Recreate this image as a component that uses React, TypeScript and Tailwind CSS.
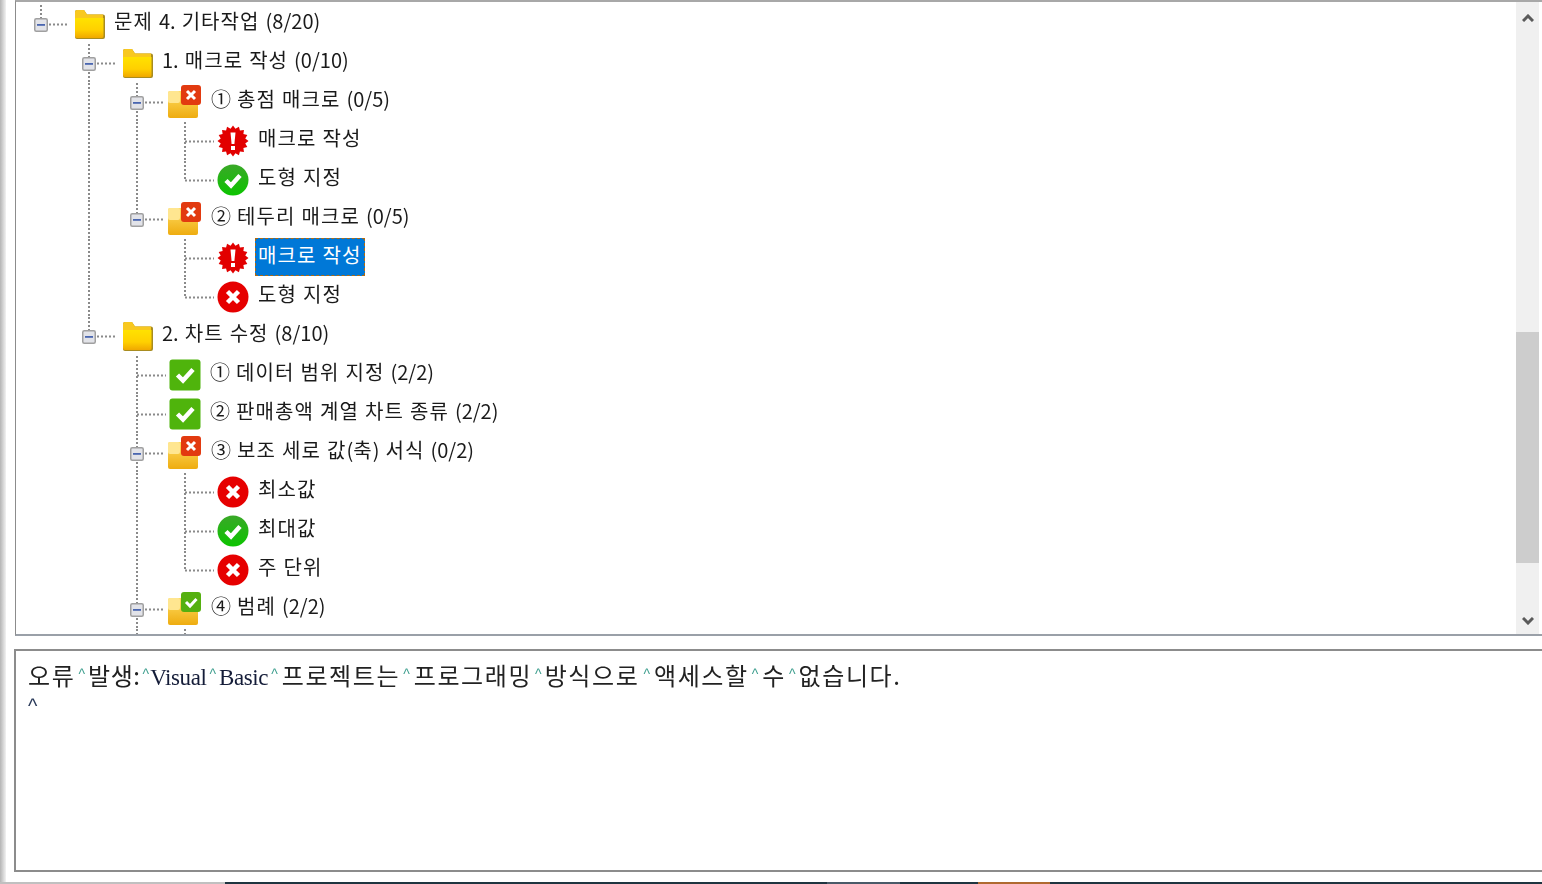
import React from "react";

type IconKind = "folder" | "folderX" | "folderOk" | "star" | "ok" | "no" | "okSquare";

type Row = {
  level: 0 | 1 | 2 | 3;
  icon: IconKind;
  label: string;
  expander?: boolean;
  guides?: number[];
  down?: boolean;
  selected?: boolean;
};

const cx = [41, 89, 137, 185];
const iconX = [75, 123, 168, 217];
const PANEL_X = 16;

const rows: Row[] = [
  { level: 0, icon: "folder", label: "문제 4. 기타작업 (8/20)", expander: true },
  { level: 1, icon: "folder", label: "1. 매크로 작성 (0/10)", expander: true, down: true },
  { level: 2, icon: "folderX", label: "① 총점 매크로 (0/5)", expander: true, guides: [89], down: true },
  { level: 3, icon: "star", label: "매크로 작성", guides: [89, 137], down: true },
  { level: 3, icon: "ok", label: "도형 지정", guides: [89, 137] },
  { level: 2, icon: "folderX", label: "② 테두리 매크로 (0/5)", expander: true, guides: [89] },
  { level: 3, icon: "star", label: "매크로 작성", guides: [89], down: true, selected: true },
  { level: 3, icon: "no", label: "도형 지정", guides: [89] },
  { level: 1, icon: "folder", label: "2. 차트 수정 (8/10)", expander: true },
  { level: 2, icon: "okSquare", label: "① 데이터 범위 지정 (2/2)", down: true },
  { level: 2, icon: "okSquare", label: "② 판매총액 계열 차트 종류 (2/2)", down: true },
  { level: 2, icon: "folderX", label: "③ 보조 세로 값(축) 서식 (0/2)", expander: true, down: true },
  { level: 3, icon: "no", label: "최소값", guides: [137], down: true },
  { level: 3, icon: "ok", label: "최대값", guides: [137], down: true },
  { level: 3, icon: "no", label: "주 단위", guides: [137] },
  { level: 2, icon: "folderOk", label: "④ 범례 (2/2)", expander: true, down: true },
];

const starPoints = Array.from({ length: 32 }, (_, i) => {
  const r = i % 2 === 0 ? 15.5 : 12.5;
  const a = (i / 32) * Math.PI * 2;
  return `${16 + r * Math.cos(a)},${16 + r * Math.sin(a)}`;
}).join(" ");

const FolderShape = ({ light }: { light?: boolean }) => (
  <>
    <defs>
      <linearGradient id="folderBody" x1="0" y1="0" x2="0" y2="1">
        <stop offset="0" stopColor="#ffe200" />
        <stop offset="0.6" stopColor="#ffd000" />
        <stop offset="1" stopColor="#f0a800" />
      </linearGradient>
      <linearGradient id="folderLight" x1="0" y1="0" x2="0" y2="1">
        <stop offset="0" stopColor="#ffdc60" />
        <stop offset="1" stopColor="#eeac10" />
      </linearGradient>
    </defs>
    {light ? (
      <>
        <rect x="0" y="6" width="30" height="27" rx="2" fill="url(#folderLight)" />
        <rect x="0" y="6" width="12" height="12" rx="2" fill="#ffe690" />
      </>
    ) : (
      <>
        <path d="M0 3Q0 1 2 1H9L12 5.5H28Q30 5.5 30 7.5V28Q30 30 28 30H2Q0 30 0 28Z" fill="#a88c20" />
        <path d="M0 3Q0 1 2 1H9L12 5.5H28V10H0Z" fill="#f8c820" />
        <path d="M0 10Q0 9 1 9H28.5V27Q28.5 29 27 29H2Q0 29 0 27Z" fill="url(#folderBody)" />
      </>
    )}
  </>
);

const StatusIcon = ({ kind }: { kind: IconKind }) => {
  if (kind === "folder") {
    return (
      <svg width="31" height="31" viewBox="0 0 31 31" className="block">
        <FolderShape />
      </svg>
    );
  }
  if (kind === "folderX" || kind === "folderOk") {
    const isX = kind === "folderX";
    return (
      <svg width="34" height="34" viewBox="0 0 34 34" className="-mt-[2px] block">
        <FolderShape light />
        <rect x="13" y="0" width="20" height="20" rx="3" fill={isX ? "#e23a10" : "#55b010"} />
        {isX ? (
          <path d="M19 6L27 14M27 6L19 14" stroke="#fff" strokeWidth="3" />
        ) : (
          <path d="M18 10L22 14L28.5 7" stroke="#fff" strokeWidth="3" fill="none" />
        )}
      </svg>
    );
  }
  if (kind === "star") {
    return (
      <svg width="32" height="32" viewBox="0 0 32 32" className="-mt-[1px] block">
        <polygon points={starPoints} fill="#e20000" />
        <path d="M13.5 7.5H18.5L17.4 19H14.6Z" fill="#fff" />
        <rect x="14" y="21" width="4" height="4" fill="#fff" />
      </svg>
    );
  }
  if (kind === "ok") {
    return (
      <svg width="32" height="32" viewBox="0 0 32 32" className="-mt-[2px] block">
        <defs>
          <linearGradient id="okFill" x1="0" y1="0" x2="0" y2="1">
            <stop offset="0" stopColor="#3aa828" />
            <stop offset="1" stopColor="#0cc400" />
          </linearGradient>
        </defs>
        <circle cx="16" cy="16" r="15.5" fill="url(#okFill)" />
        <path d="M9 16.5L14 21.5L23 11.5" stroke="#fff" strokeWidth="4.5" fill="none" />
      </svg>
    );
  }
  if (kind === "no") {
    return (
      <svg width="32" height="32" viewBox="0 0 32 32" className="-mt-[2px] block">
        <circle cx="16" cy="16" r="15.5" fill="#e60000" />
        <path d="M10.5 10.5L21.5 21.5M21.5 10.5L10.5 21.5" stroke="#fff" strokeWidth="4.5" />
      </svg>
    );
  }
  return (
    <svg width="32" height="32" viewBox="0 0 32 32" className="-mt-[1px] block">
      <rect x="0.5" y="0.5" width="31" height="31" rx="3" fill="#4fb40c" />
      <path d="M8.5 16L14 21.5L24 10.5" stroke="#fff" strokeWidth="4.5" fill="none" />
    </svg>
  );
};

const Guides = ({ row }: { row: Row }) => {
  const x = cx[row.level];
  const ix = iconX[row.level] + (row.icon === "okSquare" ? 1 : 0);
  const dots = { stroke: "#8a8a8a", strokeWidth: 2, strokeDasharray: "2 2" };
  const lineY = 19.5;
  const endGap = row.level < 2 ? 6 : 3;
  return (
    <svg width={ix - PANEL_X} height="39" className="block shrink-0">
      {(row.guides ?? []).map((g) => (
        <line key={g} x1={g - PANEL_X} x2={g - PANEL_X} y1="0" y2="39" {...dots} />
      ))}
      <line x1={x - PANEL_X} x2={x - PANEL_X} y1="0" y2={row.down ? 39 : lineY} {...dots} />
      <line x1={x - PANEL_X} x2={ix - PANEL_X - endGap} y1={lineY} y2={lineY} {...dots} />
      {row.expander && (
        <g transform={`translate(${x - PANEL_X - 7} 13)`}>
          <rect x="0.75" y="0.75" width="12.5" height="12.5" rx="1.5" fill="#e2e3e8" stroke="#a0a0a0" strokeWidth="1.5" />
          <rect x="3" y="6" width="8" height="1.8" fill="#4a66b0" />
        </g>
      )}
    </svg>
  );
};

// hangul runs carry the tracking, digits and spaces sit tighter like in the original font
const Label = ({ text }: { text: string }) => (
  <>
    {text.split(/([가-힣]+)/).map((part, i) =>
      /[가-힣]/.test(part) ? (
        <span key={i} className="tracking-[1.1px]">
          {part}
        </span>
      ) : (
        <span key={i}>{part}</span>
      ),
    )}
  </>
);

const TreeRow = ({ row }: { row: Row }) => {
  const gap = row.level === 3 ? 9 : row.level === 2 ? 9 : 8;
  return (
    <div className="flex h-[39px] shrink-0 items-center">
      <Guides row={row} />
      <StatusIcon kind={row.icon} />
      {row.selected ? (
        <span className="ml-[6px] -mt-[3px] flex h-[38px] w-[110px] items-center border border-dashed border-[#b06a10] bg-[#0078d7] pb-[4px] pl-[2px] text-[20px] [word-spacing:1.5px] whitespace-pre text-white">
          <Label text={row.label} />
        </span>
      ) : (
        <span
          className="pb-[7px] text-[20px] [word-spacing:1.5px] whitespace-pre text-[#1a1a1a]"
          style={{ marginLeft: gap }}
        >
          <Label text={row.label} />
        </span>
      )}
    </div>
  );
};

const Caret = () => (
  <span className="relative -top-[6px] mx-[3px] font-['Liberation_Sans',sans-serif] text-[14px] tracking-normal text-[#3f9f8f]">
    ^
  </span>
);

const Ko = ({ children }: { children: string }) => (
  <span className="tracking-[1.6px]">{children}</span>
);

const En = ({ children }: { children: string }) => (
  <span className="font-['Liberation_Serif',serif] text-[23px] tracking-[-0.4px] text-[#141c38]">{children}</span>
);

export default function App() {
  return (
    <div className="flex h-[884px] w-[1542px] flex-col overflow-hidden bg-white font-['Noto_Sans_CJK_KR',sans-serif]">
      <div className="flex min-h-0 flex-1">
        <div className="w-[6px] shrink-0 bg-gradient-to-r from-[#b4b4b4] to-[#f2f2f2]" />
        <div className="flex min-w-0 flex-1 flex-col">
          <div className="ml-[9px] flex h-[636px] shrink-0 border-t-2 border-b-2 border-l border-t-[#a8a8a8] border-b-[#9aa0a8] border-l-[#8c8c8c]">
            <div className="flex min-w-0 flex-1 flex-col overflow-hidden pt-[3px] blur-[0.35px]">
              {rows.map((row, i) => (
                <TreeRow key={i} row={row} />
              ))}
              <svg width="190" height="10" className="block shrink-0">
                <line x1="121" x2="121" y1="0" y2="10" stroke="#8a8a8a" strokeWidth="2" strokeDasharray="2 2" />
                <line x1="169" x2="169" y1="0" y2="10" stroke="#8a8a8a" strokeWidth="2" strokeDasharray="2 2" />
              </svg>
            </div>
            <div className="mr-[3px] flex w-[23px] shrink-0 flex-col bg-[#f0f0f0] pt-[2px]">
              <div className="flex h-[28px] items-center justify-center">
                <svg width="12" height="8" viewBox="0 0 12 8">
                  <path d="M1 7L6 2L11 7" stroke="#5a5a5a" strokeWidth="3" fill="none" />
                </svg>
              </div>
              <div className="mt-[300px] h-[231px] bg-[#cdcdcd]" />
              <div className="mt-auto flex h-[26px] items-center justify-center">
                <svg width="12" height="8" viewBox="0 0 12 8">
                  <path d="M1 1L6 6L11 1" stroke="#5a5a5a" strokeWidth="3" fill="none" />
                </svg>
              </div>
            </div>
          </div>
          <div className="mt-[13px] ml-[8px] h-[223px] shrink-0 border-t-2 border-b-2 border-l-2 border-t-[#8c8c8c] border-b-[#8c8c8c] border-l-[#8c8c8c] pt-[8px] pl-[12px] text-[24px] leading-[32px] text-[#222]">
            <div className="blur-[0.3px]">
              <div className="whitespace-pre">
                <Ko>오류</Ko>
                <Caret />
                <span className="tracking-[0.6px]">발생:</span>
                <span className="-ml-[1px]">
                  <Caret />
                </span>
                <span className="-ml-[2px]">
                  <En>Visual</En>
                </span>
                <Caret />
                <En>Basic</En>
                <span className="mr-[1px]">
                  <Caret />
                </span>
                <Ko>프로젝트는</Ko>
                <span className="mr-[1px]">
                  <Caret />
                </span>
                <Ko>프로그래밍</Ko>
                <Caret />
                <Ko>방식으로</Ko>
                <span className="mx-[1px]">
                  <Caret />
                </span>
                <Ko>액세스할</Ko>
                <span className="mr-[1px]">
                  <Caret />
                </span>
                <Ko>수</Ko>
                <Caret />
                <Ko>없습니다.</Ko>
              </div>
              <div className="-mt-[4px] font-['Liberation_Sans',sans-serif] text-[20px] leading-[28px] text-[#2a3a5a]">^</div>
            </div>
          </div>
        </div>
      </div>
      <div className="flex h-[2px] shrink-0">
        <div className="w-[225px] bg-[#c0c0c0]" />
        <div className="w-[602px] bg-[#1f3540]" />
        <div className="w-[73px] bg-[#4a5a68]" />
        <div className="w-[78px] bg-[#1f3540]" />
        <div className="w-[72px] bg-[#b06a30]" />
        <div className="flex-1 bg-[#1f3540]" />
      </div>
    </div>
  );
}
